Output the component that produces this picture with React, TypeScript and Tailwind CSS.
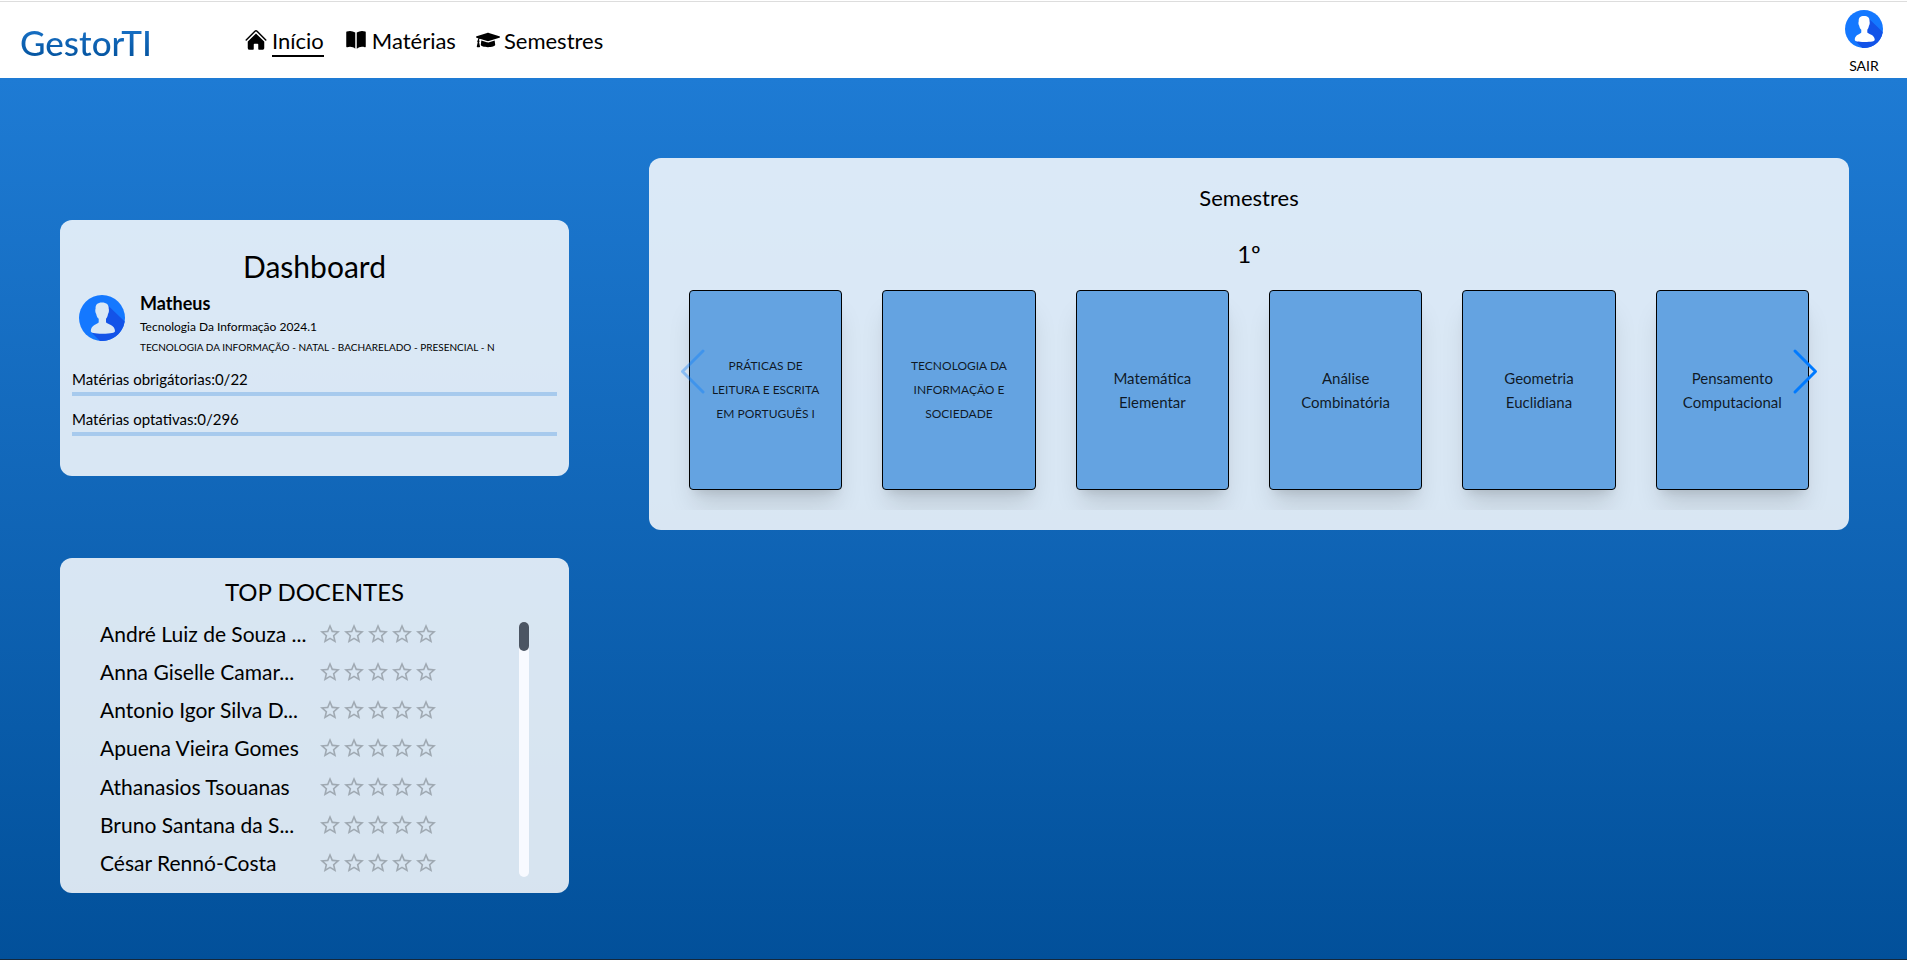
import { HiHome, HiBookOpen } from "react-icons/hi2";
import { FaGraduationCap } from "react-icons/fa";
import { MdStarBorder } from "react-icons/md";

const teachers = [
  "André Luiz de Souza ...",
  "Anna Giselle Camar...",
  "Antonio Igor Silva D...",
  "Apuena Vieira Gomes",
  "Athanasios Tsouanas",
  "Bruno Santana da S...",
  "César Rennó-Costa",
];

const subjects = [
  { name: "PRÁTICAS DE LEITURA E ESCRITA EM PORTUGUÊS I", size: "text-xs" },
  { name: "TECNOLOGIA DA INFORMAÇÃO E SOCIEDADE", size: "text-xs" },
  { name: "Matemática Elementar", size: "text-[15px]" },
  { name: "Análise Combinatória", size: "text-[15px]" },
  { name: "Geometria Euclidiana", size: "text-[15px]" },
  { name: "Pensamento Computacional", size: "text-[15px]" },
];

const stars = [1, 2, 3, 4, 5];

function Avatar({ className }: { className: string }) {
  return (
    <svg viewBox="0 0 46 46" className={className} aria-hidden="true">
      <circle cx="23" cy="23" r="23" fill="#1478ff" />
      <path d="M29 10.500L45.700 26.500A23 23 0 0 1 21 45.900L13 38L23 30Z" fill="#1353e8" />
      <path
        d="M23 7.400C27.500 7.400 30 9.600 29.700 13.500C30.200 15 30 17.500 29 19C28.600 21.500 27.800 22.800 27 23.800V27.300C28 29.300 36 29.800 36 36C36 38 32 38.700 23.500 38.700C15.500 38.700 11.800 38 11.800 36C11.800 29.800 19 29.300 19.700 27.300V23.800C18.500 22.800 17.600 21.300 17.200 19C16.200 17.500 16 15 16.600 13.500C16.300 9.600 18.500 7.400 23 7.400Z"
        fill="currentColor"
      />
    </svg>
  );
}

function Progress({ id, label, value, max }: { id: string; label: string; value: number; max: number }) {
  return (
    <div className="flex flex-col gap-px">
      <span id={id} className="text-[15px] leading-6">
        {label}:{value}/{max}
      </span>
      <div
        role="progressbar"
        aria-labelledby={id}
        aria-valuenow={value}
        aria-valuemax={max}
        className="h-1 bg-[#a7caed]"
      >
        <div className="h-full bg-[#1976d2]" style={{ width: `${(value / max) * 100}%` }} />
      </div>
    </div>
  );
}

function Header() {
  return (
    <header className="mt-px flex h-[77px] items-center border-t border-[#dddddd] bg-white pr-6 pl-5">
      <a
        href="#"
        className="w-[224px] bg-linear-to-b from-[#1e7bd4] to-[#02509a] bg-clip-text pt-1 text-[35px] leading-10 font-medium text-transparent"
      >
        GestorTI
      </a>
      <nav className="flex items-center gap-5 text-[22px] leading-7">
        <a href="#" className="flex items-center gap-1">
          <HiHome size={24} />
          <span className="mt-1 border-b-2 border-black">Início</span>
        </a>
        <a href="#" className="flex items-center gap-1">
          <HiBookOpen size={24} />
          <span className="mt-0.5">Matérias</span>
        </a>
        <a href="#" className="flex items-center gap-1">
          <FaGraduationCap size={24} />
          <span className="mt-0.5">Semestres</span>
        </a>
      </nav>
      <button type="button" className="ml-auto flex flex-col items-center gap-2 pt-[5px]">
        <Avatar className="size-[38px] text-white" />
        <span className="text-sm leading-5">SAIR</span>
      </button>
    </header>
  );
}

function Dashboard() {
  return (
    <section className="flex h-64 flex-col rounded-xl bg-white/84 px-3 pt-[26px]">
      <h1 className="text-center text-[30px] leading-10">Dashboard</h1>
      <div className="flex gap-[15px] pt-[5px] pl-[7px]">
        <Avatar className="mt-1 size-[46px] text-[#dae8f5]" />
        <div className="flex flex-col">
          <h2 className="text-lg leading-6 font-bold">Matheus</h2>
          <p className="text-xs leading-6">Tecnologia Da Informação 2024.1</p>
          <p className="text-[10px] leading-4">
            TECNOLOGIA DA INFORMAÇÃO - NATAL - BACHARELADO - PRESENCIAL - N
          </p>
        </div>
      </div>
      <div className="flex flex-col gap-[11px] pt-3">
        <Progress id="required" label="Matérias obrigátorias" value={0} max={22} />
        <Progress id="optional" label="Matérias optativas" value={0} max={296} />
      </div>
    </section>
  );
}

function TopTeachers() {
  return (
    <section className="rounded-xl bg-white/84 px-10 pt-[14px] pb-4">
      <h2 className="text-center text-2xl leading-10">TOP DOCENTES</h2>
      <div className="flex justify-between pt-[10px]">
        <ul className="flex h-[253px] flex-col justify-between">
          {teachers.map((name) => (
            <li key={name} className="flex items-center">
              <span className="w-[218px] text-[21px] leading-6 whitespace-nowrap">{name}</span>
              <span className="flex text-black/26" role="img" aria-label="0 de 5 estrelas">
                {stars.map((n) => (
                  <MdStarBorder key={n} size={24} />
                ))}
              </span>
            </li>
          ))}
        </ul>
        <div className="h-[255px] w-[10px] rounded-full bg-[#f8faff]">
          <div className="h-[29px] rounded-full bg-[#4b5563]" />
        </div>
      </div>
    </section>
  );
}

function Semesters() {
  return (
    <section className="min-w-0 flex-1 rounded-xl bg-white/84 px-5 pt-5 pb-5">
      <h2 className="text-center text-[22px] leading-10">Semestres</h2>
      <div className="relative overflow-hidden px-5 pt-4 pb-5">
        <h3 className="pb-4 text-center text-2xl leading-10">1º</h3>
        <ul className="grid grid-cols-6 gap-10">
          {subjects.map((s) => (
            <li
              key={s.name}
              className="flex h-50 items-center justify-center rounded border border-black bg-[#64a3e1] px-2 shadow-[0_20px_25px_-5px_rgba(0,0,0,0.12),0_8px_10px_-6px_rgba(0,0,0,0.12)]"
            >
              <p className={`${s.size} max-w-[120px] text-center leading-6 text-black/85`}>{s.name}</p>
            </li>
          ))}
        </ul>
        <button type="button" aria-label="Anterior" disabled className="absolute top-[129px] left-[10px] opacity-35">
          <svg width="27" height="48" viewBox="0 0 27 48" fill="none" stroke="#007aff" strokeWidth="3" strokeLinecap="round" strokeLinejoin="round">
            <path d="M24 4L3.500 24.500L24 45" />
          </svg>
        </button>
        <button type="button" aria-label="Próximo" className="absolute top-[129px] right-[10px]">
          <svg width="27" height="48" viewBox="0 0 27 48" fill="none" stroke="#007aff" strokeWidth="3" strokeLinecap="round" strokeLinejoin="round">
            <path d="M3 4L23.500 24.500L3 45" />
          </svg>
        </button>
      </div>
    </section>
  );
}

export default function App() {
  return (
    <div className="flex min-h-screen flex-col bg-white font-['Lato','Liberation_Sans',sans-serif] text-black">
      <Header />
      <main className="flex flex-1 items-start gap-20 border-b border-[#14283c] bg-linear-to-b from-[#1e7bd4] to-[#02509a] pt-20 pr-[58px] pb-16 pl-[60px]">
        <div className="flex w-[509px] shrink-0 flex-col gap-[82px] pt-[62px]">
          <Dashboard />
          <TopTeachers />
        </div>
        <Semesters />
      </main>
    </div>
  );
}
